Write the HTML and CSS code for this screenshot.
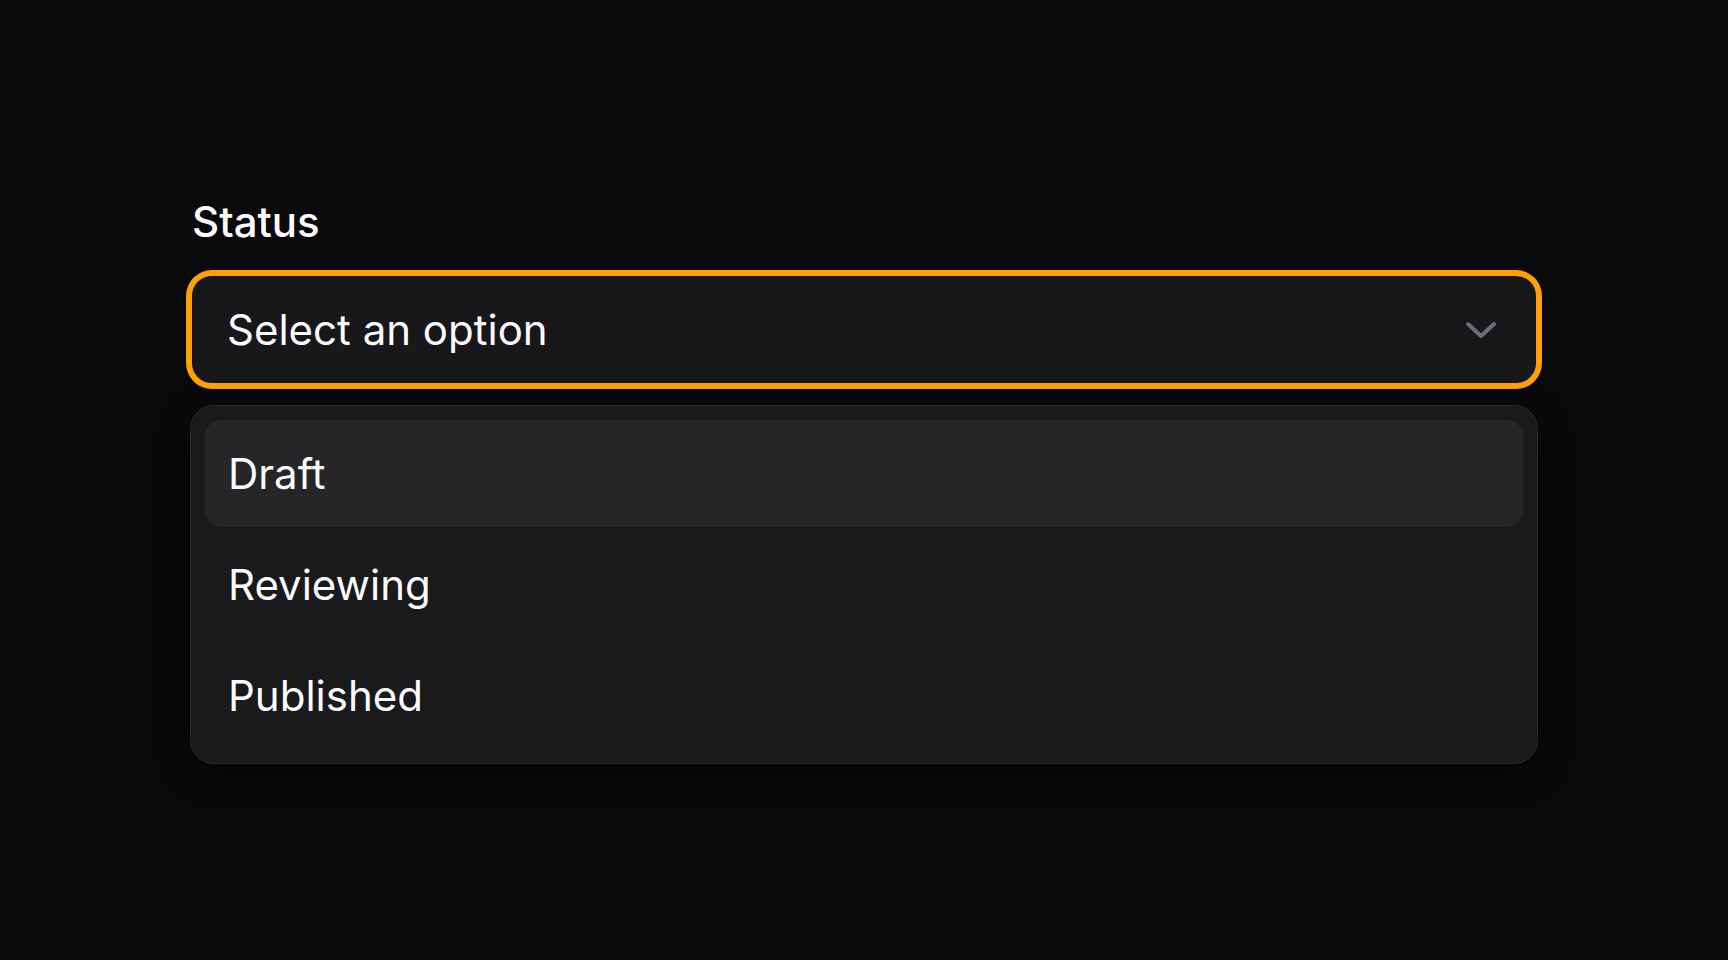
FILE: index.html
```html
<!DOCTYPE html>
<html lang="en">
<head>
<meta charset="utf-8">
<title>Status select</title>
<link rel="stylesheet" href="styles.css">
</head>
<body>
  <main class="field">
    <label class="field-label" for="status">Status</label>
    <button class="select" id="status" type="button" aria-haspopup="listbox" aria-expanded="true">
      <span class="select-value">Select an option</span>
      <svg class="chevron" width="32" height="20" viewBox="0 0 32 20" aria-hidden="true">
        <polyline points="3,4 16,16 29,4" fill="none" stroke="currentColor" stroke-width="4" stroke-linecap="round" stroke-linejoin="round"/>
      </svg>
    </button>
    <ul class="menu" role="listbox">
      <li class="option option-active" role="option">Draft</li>
      <li class="option" role="option">Reviewing</li>
      <li class="option" role="option">Published</li>
    </ul>
  </main>
</body>
</html>
```

FILE: styles.css
```css
* {
  box-sizing: border-box;
}

html, body {
  margin: 0;
  padding: 0;
  background: #0a0a0c;
}

body {
  font-family: Inter, "Noto Sans", "Liberation Sans", sans-serif;
  color: #fafafa;
  min-height: 960px;
}

.field {
  width: 1348px;
  margin: 0 auto;
  padding-top: 198px;
  display: flex;
  flex-direction: column;
}

.field-label {
  font-size: 42px;
  line-height: 48px;
  font-weight: 500;
  color: #fafafa;
  margin-bottom: 28px;
  padding-left: 2px;
}

.select {
  display: flex;
  align-items: center;
  justify-content: space-between;
  width: 100%;
  height: 111px;
  padding: 0 39px 0 35px;
  background: #18181b;
  border: 2px solid #ff9f0a;
  border-radius: 22px;
  box-shadow: 0 0 0 4px #ff9f0a;
  font: inherit;
  color: #fafafa;
  text-align: left;
  cursor: pointer;
}

.select-value {
  font-size: 42px;
  line-height: 48px;
  font-weight: 400;
}

.chevron {
  color: #6c6c76;
  flex: none;
}

.menu {
  list-style: none;
  margin: 20px 0 0;
  padding: 14px;
  background: #1a1a1c;
  border: 1px solid #2a2a2e;
  border-radius: 24px;
  box-shadow: 0 10px 30px rgba(0, 0, 0, 0.5);
  display: flex;
  flex-direction: column;
  gap: 4px;
}

.option {
  height: 107px;
  display: flex;
  align-items: center;
  padding: 0 23px;
  border-radius: 16px;
  font-size: 42px;
  line-height: 48px;
  color: #fafafa;
}

.option-active {
  background: #262629;
}
```
